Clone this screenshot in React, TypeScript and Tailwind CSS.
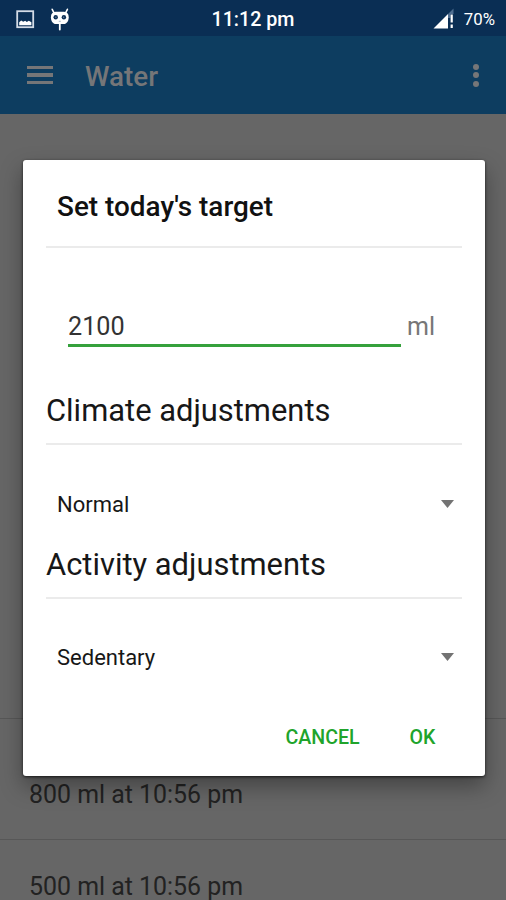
import React from "react";

function StatusBar() {
  return (
    <div className="grid h-9 grid-cols-3 items-center bg-[#0a2e54] text-white">
      <div className="flex items-center pl-4">
        <svg width="19" height="19" viewBox="0 0 19 19">
          <rect x="1.2" y="1.2" width="16" height="16" fill="none" stroke="#d3dbe6" strokeWidth="1.8" />
          <path d="M3.2 15.3v-3l2-1.8 2 1.2 2-1 1.600 1.200 2-1.200 2.600 1.600v3z" fill="#fff" />
        </svg>
        <svg className="ml-[15px]" width="20" height="24" viewBox="0 0 20 24">
          <path d="M2.200 2.300l2 4M17.400 2.300l-2 4" stroke="#fff" strokeWidth="1.600" strokeLinecap="round" />
          <path d="M6 4.800h7.600c3.400 0 5.100 2 5.100 5.400s-1.800 6.900-5.100 6.900H6c-3.300 0-5.100-3.500-5.100-6.900S2.600 4.800 6 4.800z" fill="#fff" />
          <path d="M9.800 16v6.500" stroke="#fff" strokeWidth="1.800" strokeLinecap="round" />
          <circle cx="5.700" cy="10.200" r="2.200" fill="#0a2e54" />
          <circle cx="13.900" cy="10.200" r="2.200" fill="#0a2e54" />
          <circle cx="5.900" cy="10.200" r="0.600" fill="#8b9db4" />
          <circle cx="13.700" cy="10.200" r="0.600" fill="#8b9db4" />
          <path d="M8.800 14.300h2" stroke="#8b9db4" strokeWidth="0.800" />
        </svg>
      </div>
      <div className="pt-[2px] text-center text-[19.7px] leading-9 font-medium whitespace-nowrap">11:12 pm</div>
      <div className="flex items-center justify-end pr-[11px]">
        <svg width="22" height="22" viewBox="0 0 22 22">
          <path d="M0.500 20.500L15 6v14.500z" fill="#fff" />
          <path d="M15 6L20.500 0.500V6h-3v4H15z" fill="#4f6e91" />
          <path d="M18.700 6.500v8M18.700 16.500v3.500" stroke="#fff" strokeWidth="2.200" />
        </svg>
        <span className="ml-[9px] text-[16.8px] leading-9">70%</span>
      </div>
    </div>
  );
}

function AppBar() {
  return (
    <div className="flex h-[78px] items-center bg-[#0d3d60] pr-[27px] pl-[27px] text-[#757678]">
      <div className="flex flex-col gap-1">
        <div className="h-[3.5px] w-[26px] bg-current" />
        <div className="h-[3.5px] w-[26px] bg-current" />
        <div className="h-[3.5px] w-[26px] bg-current" />
      </div>
      <h1 className="ml-8 flex-1 pt-[3px] text-[27.8px] leading-[75px] font-medium">Water</h1>
      <div className="flex flex-col gap-[2.5px]">
        <div className="h-[6px] w-[6px] rounded-full bg-current" />
        <div className="h-[6px] w-[6px] rounded-full bg-current" />
        <div className="h-[6px] w-[6px] rounded-full bg-current" />
      </div>
    </div>
  );
}

function Adjustment({ title, value }: { title: string; value: string }) {
  return (
    <section className="h-[153.5px]">
      <h3 className="h-[52px] pt-px text-[30.9px] leading-[38px] whitespace-nowrap">{title}</h3>
      <div className="h-[2px] bg-[#ebebeb]" />
      <div className="flex h-[117px] items-center justify-between pr-[8px] pl-[11px]">
        <span className="pt-[1px] text-[22px]">{value}</span>
        <svg width="13" height="8" viewBox="0 0 13 8">
          <path d="M0 0h13L6.500 8z" fill="#737373" />
        </svg>
      </div>
    </section>
  );
}

function TargetDialog() {
  return (
    <div className="absolute top-[160px] left-[23px] h-[615.5px] w-[461.5px] rounded-[3px] bg-white px-[23px] text-[#171717] shadow-[0_1px_3px_rgba(0,0,0,0.7),0_10px_22px_rgba(0,0,0,0.35)]">
      <h2 className="h-[88px] border-b-2 border-[#ebebeb] pl-[11px] text-[27.9px] leading-[94px] font-medium whitespace-nowrap text-[#111]">
        Set today's target
      </h2>
      <div className="flex h-[99px] items-end pl-[22px]">
        <div className="h-[39px] w-[333px] border-b-[3px] border-[#35a13c] text-[25.2px] leading-[38px] text-[#333]">2100</div>
        <div className="h-[39px] pl-[6px] text-[25px] leading-[38px] text-[#777]">ml</div>
      </div>
      <div className="pt-[44px]">
        <Adjustment title="Climate adjustments" value="Normal" />
        <Adjustment title="Activity adjustments" value="Sedentary" />
      </div>
      <div className="flex h-[79px] items-center justify-end gap-[50px] pr-[26px] text-[19.6px] font-medium text-[#20a42b]">
        <span>CANCEL</span>
        <span>OK</span>
      </div>
    </div>
  );
}

export default function App() {
  return (
    <div className="relative h-[900px] w-[506px] overflow-hidden bg-[#666] font-['Roboto',sans-serif]">
      <StatusBar />
      <AppBar />
      <div className="h-[605px] border-b border-[#575757]" />
      <div className="h-[121px] border-b border-[#575757] pt-[57px] pl-[29px] text-[24.9px] leading-[38px] text-[#222]">800 ml at 10:56 pm</div>
      <div className="pt-[28px] pl-[29px] text-[24.9px] leading-[38px] text-[#222]">500 ml at 10:56 pm</div>
      <TargetDialog />
    </div>
  );
}
